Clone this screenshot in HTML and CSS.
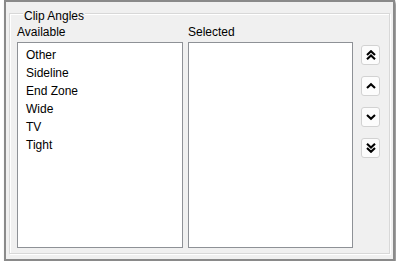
FILE: index.html
```html
<!DOCTYPE html>
<html lang="en">
<head>
  <meta charset="UTF-8" />
  <title>Clip Angles</title>
  <link rel="stylesheet" href="styles.css">
</head>
<body>
  <div class="window">
    <div class="group">
      <span class="group-title">Clip Angles</span>
      <div class="columns">
        <div class="column left">
          <span class="col-label">Available</span>
          <ul class="listbox">
            <li>Other</li>
            <li>Sideline</li>
            <li>End Zone</li>
            <li>Wide</li>
            <li>TV</li>
            <li>Tight</li>
          </ul>
        </div>
        <div class="column right">
          <span class="col-label">Selected</span>
          <ul class="listbox"></ul>
        </div>
        <div class="buttons">
          <button class="move-btn" title="Move to top">
            <svg width="10" height="10" viewBox="0 0 10 10"><path d="M1 5 L5 1.2 L9 5 M1 9.2 L5 5.4 L9 9.2" fill="none" stroke="#000" stroke-width="2.1"/></svg>
          </button>
          <button class="move-btn" title="Move up">
            <svg width="10" height="10" viewBox="0 0 10 10"><path d="M1 7 L5 3.2 L9 7" fill="none" stroke="#000" stroke-width="2.1"/></svg>
          </button>
          <button class="move-btn" title="Move down">
            <svg width="10" height="10" viewBox="0 0 10 10"><path d="M1 3 L5 6.8 L9 3" fill="none" stroke="#000" stroke-width="2.1"/></svg>
          </button>
          <button class="move-btn" title="Move to bottom">
            <svg width="10" height="10" viewBox="0 0 10 10"><path d="M1 0.8 L5 4.6 L9 0.8 M1 5 L5 8.8 L9 5" fill="none" stroke="#000" stroke-width="2.1"/></svg>
          </button>
        </div>
      </div>
    </div>
  </div>
</body>
</html>
```

FILE: styles.css
```css
body {
  margin: 0;
  background: #fff;
  font-family: "Liberation Sans", Arial, sans-serif;
  font-size: 12px;
  line-height: 14px;
  color: #000;
}

.window {
  box-sizing: border-box;
  width: 391px;
  height: 261px;
  margin-left: 4px;
  padding: 11px 3px 0 3px;
  background: #f0f0f0;
  border: 2px solid #8a8a8a;
  box-shadow: 2px 2px 3px rgba(0, 0, 0, 0.45);
}

.group {
  box-sizing: border-box;
  display: flex;
  flex-direction: column;
  height: 241px;
  padding: 0 6px 0 7px;
  border: 1px solid #d8d8d8;
  box-shadow: inset 1px 1px 0 #fff, 1px 1px 0 #fff;
}

.group-title {
  align-self: flex-start;
  margin: -5px 0 0 6px;
  padding: 0 1px;
  background: #f0f0f0;
}

.columns {
  display: flex;
  margin-top: 2px;
}

.column {
  display: flex;
  flex-direction: column;
}

.column.left {
  width: 166px;
}

.column.right {
  width: 165px;
  margin-left: 5px;
}

.col-label {
  margin-bottom: 3px;
}

.listbox {
  box-sizing: border-box;
  height: 206px;
  margin: 0;
  padding: 3px 0 0 8px;
  list-style: none;
  background: #fff;
  border: 1px solid #8e9196;
}

.listbox li {
  line-height: 18px;
}

.buttons {
  display: flex;
  flex-direction: column;
  gap: 11px;
  margin: 20px 0 0 8px;
}

.move-btn {
  box-sizing: border-box;
  display: flex;
  align-items: center;
  justify-content: center;
  width: 19px;
  height: 20px;
  padding: 0;
  background: #fcfcfc;
  border: 1px solid #d2d2d2;
  border-radius: 3px;
}
```
